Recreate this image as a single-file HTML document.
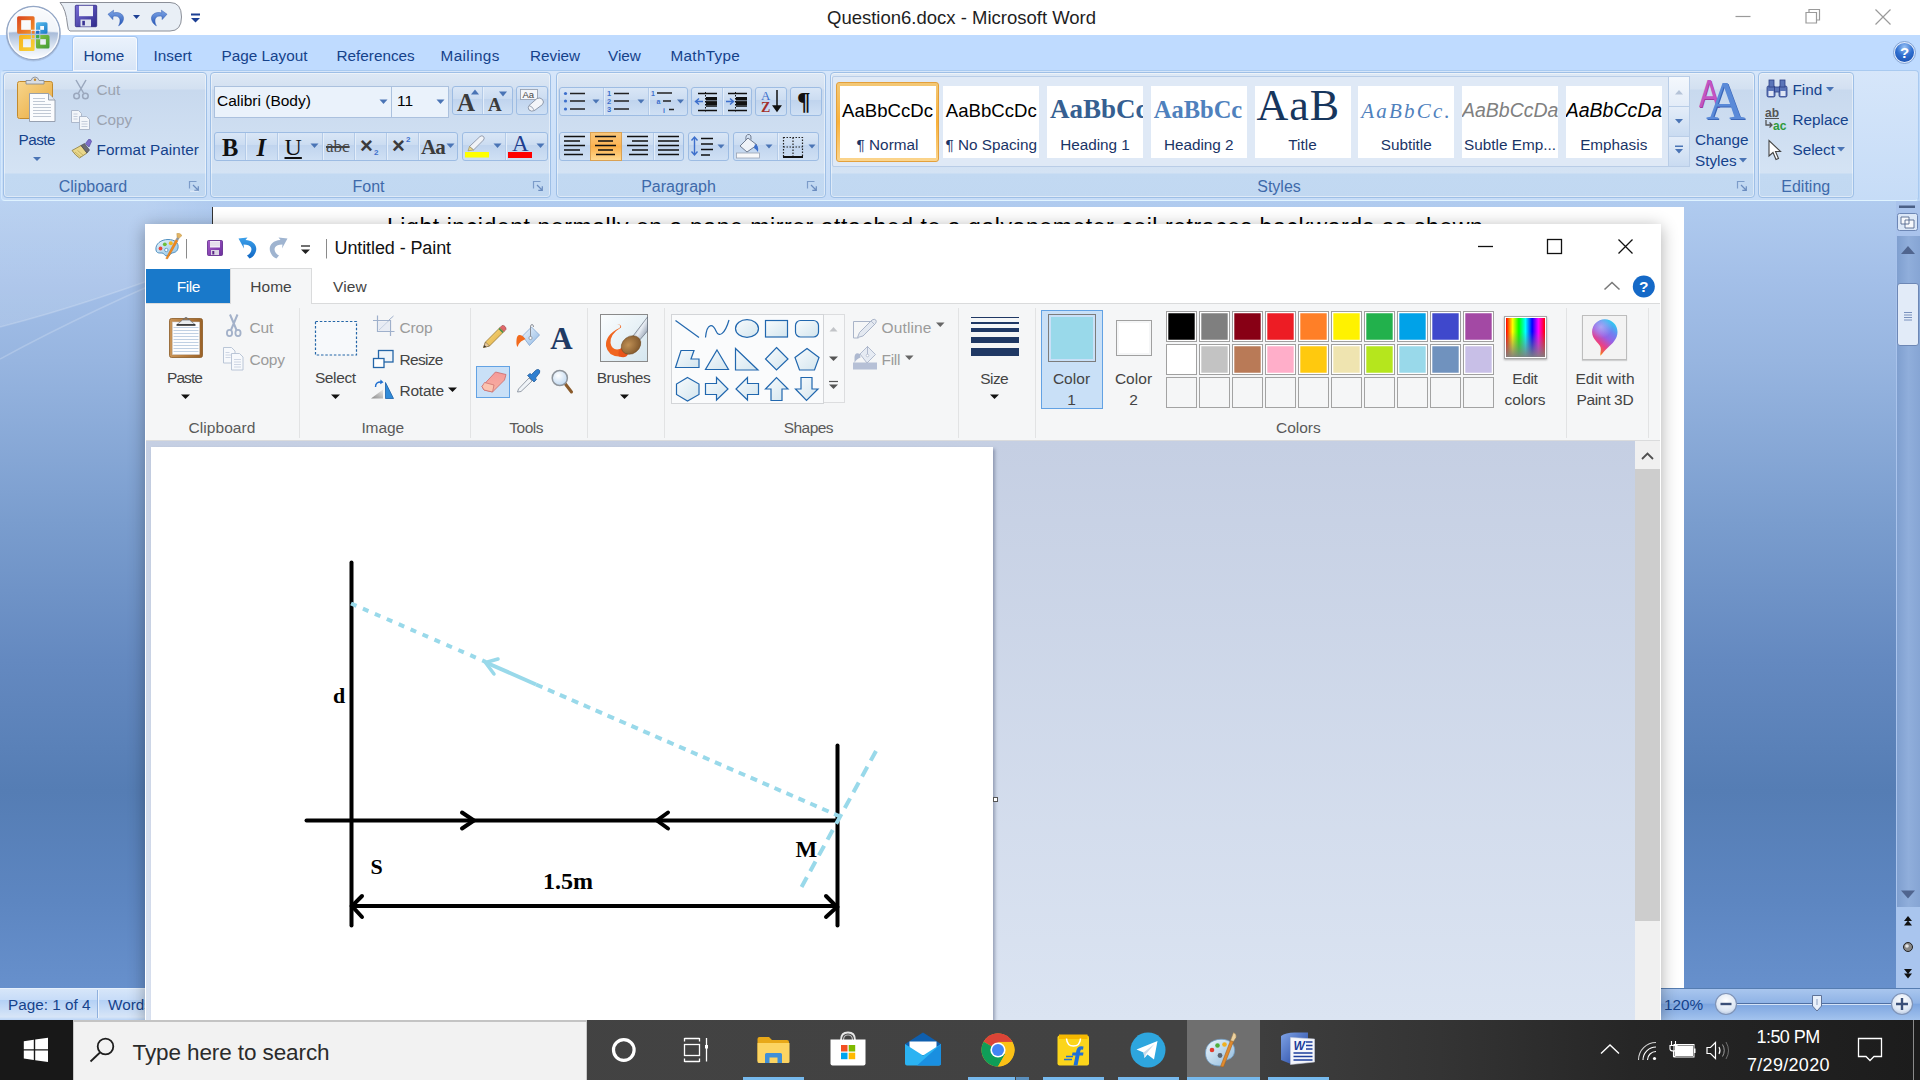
<!DOCTYPE html>
<html lang="en">
<head>
<meta charset="utf-8">
<title>Question6.docx - Microsoft Word</title>
<style>
*{box-sizing:border-box;margin:0;padding:0}
html,body{width:1920px;height:1080px;overflow:hidden;background:#fff;font-family:"Liberation Sans",sans-serif;}
.a{position:absolute}
.t{position:absolute;white-space:nowrap;line-height:1}
svg{position:absolute;overflow:visible}
/* ---------- WORD ---------- */
#w-title{left:0;top:0;width:1920px;height:35px;background:#fff}
#w-tabs{left:0;top:35px;width:1920px;height:35px;background:#bfdbff}
#w-ribbon{left:0;top:70px;width:1920px;height:131px;background:linear-gradient(#c3dcfb 0,#bdd7f6 100%)}
#w-ribbon-inner{left:1px;top:70px;width:1918px;height:131px;border:1px solid #a9caf0;border-bottom:1.5px solid #dff3ff;border-left-color:#d3e9fd;border-radius:4px;background:linear-gradient(#d6e6fa 0,#c6dcf7 100%)}
.wt{position:absolute;top:47px;font-size:15.3px;color:#15428b;white-space:nowrap;line-height:18px}
.grp{position:absolute;top:72px;height:126px;border:1px solid #9ebfe6;border-radius:4px;background:linear-gradient(#dde8f5 0,#d3e0f1 16px,#c8d9ee 17px,#d4e3f4 100px,#c2d9f2 101px,#c1d8f1 100%);box-shadow:inset 0 0 0 1px rgba(255,255,255,.45)}
.grp .lbl{position:absolute;left:0;right:0;top:105px;text-align:center;font-size:16px;color:#3e6aaa;line-height:18px}
.bg{position:absolute;height:29px;border:1px solid #9dbce3;border-radius:3px;background:linear-gradient(#d9e6f6 0,#cbdcf1 45%,#c0d4ee 46%,#cfe0f4 100%)}
.bsep{position:absolute;top:0;bottom:0;width:1px;background:#b4cbe8;border-right:1px solid #e4eefa;box-sizing:content-box}
#w-doc{left:0;top:201px;width:1920px;height:787px;background:linear-gradient(#b0cbef 0,#a3bfe8 80px,#97b5e0 160px,#7a9dce 320px,#6489c0 460px,#557db4 590px,#5d86c1 700px,#6790cc 787px)}
#w-page{left:212px;top:207px;width:1472px;height:820px;background:#fff;border-left:1px solid #333;}
#w-status{left:0;top:988px;width:1920px;height:32px;background:linear-gradient(#d7e6f9 0,#c7dcf8 35%,#b3d0f5 36%,#d7e5f7 90%,#bad4f7 100%);border-top:1px solid #e6f0fc}
.sb{position:absolute;top:86px;width:96px;height:72px;background:#fff;overflow:hidden}
.sb .pv{position:absolute;left:0;right:0;text-align:center;white-space:nowrap;line-height:1.15}
.sb .nm{position:absolute;left:0;right:0;top:50px;text-align:center;font-size:15.3px;color:#1a3466;white-space:nowrap;line-height:18px}
/* ---------- PAINT ---------- */
#p-win{left:145px;top:224px;width:1516px;height:800px;background:#fff;box-shadow:0 3px 16px rgba(0,0,0,.33)}
#p-rib{left:146px;top:303px;width:1514px;height:138px;background:#f5f6f7;border-top:1px solid #dadbdc;border-bottom:1px solid #dadbdc}
#p-work{left:146px;top:441px;width:1489px;height:579px;background:linear-gradient(#c5cfe3 0,#dbe4f2 100%)}
#p-canvas{left:151px;top:447px;width:842px;height:573px;background:#fff;box-shadow:2px 2px 3px rgba(90,100,130,.5)}
.pt{position:absolute;font-size:15.5px;color:#444;white-space:nowrap;line-height:18px}
.pd{color:#9d9d9d}
.psep{position:absolute;top:308px;height:130px;width:1px;background:#e2e3e4}
.plbl{position:absolute;top:418px;font-size:15.5px;color:#5d5d5d;line-height:18px;white-space:nowrap;transform:translateX(-50%)}
.cc{position:absolute;width:31px;height:31px;border:1px solid #a0a0a0;box-shadow:inset 0 0 0 1.3px #fff}
.ce{position:absolute;width:31px;height:31px;border:1px solid #a3a3a3;background:#f5f6f7}
/* ---------- TASKBAR ---------- */
#tb{left:0;top:1020px;width:1920px;height:60px;background:linear-gradient(90deg,#434343 0,#424242 62%,#343434 75%,#262626 85%,#1c1c1c 100%)}
</style>
</head>
<body>
<!-- ================= WORD ================= -->
<div id="w-title" class="a"></div>
<div id="w-tabs" class="a"></div>
<div id="w-ribbon" class="a"></div>
<div id="w-ribbon-inner" class="a"></div>
<div id="w-doc" class="a"></div>
<div id="w-page" class="a"></div>
<div id="w-status" class="a"></div>
<!-- title bar -->
<svg class="a" style="left:0;top:0" width="220" height="70" viewBox="0 0 220 70">
  <defs>
    <radialGradient id="ob" cx="50%" cy="30%" r="75%">
      <stop offset="0" stop-color="#ffffff"/><stop offset=".45" stop-color="#e9eff7"/><stop offset=".75" stop-color="#b9c9e0"/><stop offset="1" stop-color="#dfe8f4"/>
    </radialGradient>
    <linearGradient id="ob2" x1="0" y1="0" x2="0" y2="1"><stop offset="0" stop-color="#f4f7fb"/><stop offset=".46" stop-color="#dfe7f2"/><stop offset=".5" stop-color="#a9bcd9"/><stop offset=".75" stop-color="#dbe5f2"/><stop offset="1" stop-color="#ffffff"/></linearGradient><linearGradient id="obh" x1="0" y1="0" x2="0" y2="1"><stop offset="0" stop-color="#fff" stop-opacity=".95"/><stop offset="1" stop-color="#fff" stop-opacity=".2"/></linearGradient>
    <linearGradient id="og" x1="0" y1="0" x2="1" y2="1"><stop offset="0" stop-color="#d9421d"/><stop offset="1" stop-color="#f59a2c"/></linearGradient>
    <linearGradient id="bl" x1="0" y1="0" x2="1" y2="1"><stop offset="0" stop-color="#5cc1ee"/><stop offset="1" stop-color="#1a78c8"/></linearGradient>
    <linearGradient id="yl" x1="0" y1="0" x2="1" y2="1"><stop offset="0" stop-color="#f7b21c"/><stop offset="1" stop-color="#f8d23a"/></linearGradient>
    <linearGradient id="gr" x1="0" y1="0" x2="1" y2="1"><stop offset="0" stop-color="#8cc63f"/><stop offset="1" stop-color="#3f9a3a"/></linearGradient>
    <linearGradient id="sv" x1="0" y1="0" x2="1" y2="1"><stop offset="0" stop-color="#7a6fd6"/><stop offset="1" stop-color="#2f2a8c"/></linearGradient>
    <linearGradient id="ud" x1="0" y1="0" x2="0" y2="1"><stop offset="0" stop-color="#7fa6e6"/><stop offset="1" stop-color="#2455b8"/></linearGradient>
  </defs>
  <!-- QAT capsule -->
  <path d="M60 2.5 H170 Q181.5 2.5 181.5 17 Q181.5 31 170 31 H70 Q68 31 67.5 25 Q66 9 60 2.5 Z" fill="#e9eff6" stroke="#8b8f98" stroke-width="1"/>
  <!-- office button -->
  <circle cx="33.400" cy="34" r="27.600" fill="#7f90ad" opacity=".3"/>
  <circle cx="33.400" cy="33.100" r="26.600" fill="url(#ob2)" stroke="#94a7c6" stroke-width="1.300"/>
  <circle cx="33.400" cy="33.100" r="25.200" fill="none" stroke="#fff" stroke-width="1.200" opacity=".85"/>
  <path d="M8.500 32.500 A24.900 24.900 0 0 1 58.300 32.500 Q33.400 29 8.500 32.500Z" fill="#fff" opacity=".55"/>
  <!-- logo -->
  <g stroke-linejoin="round">
    <path d="M18.600 16.200 H33.100 Q34.600 16.200 34.600 17.700 V29.700 H30.800 V20.200 H21.250 V29.700 H30.800 V33.700 H18.600 Q17.100 33.700 17.100 32.200 V17.700 Q17.100 16.200 18.600 16.200Z" fill="url(#og)"/>
    <rect x="31.800" y="30.700" width="2.800" height="3" rx=".5" fill="#f07c2c"/><rect x="21.250" y="20.200" width="9.550" height="9.500" fill="#fff" opacity=".45"/>
    <path d="M37.500 22.200 H46 Q47.500 22.200 47.500 23.700 V32.200 Q47.500 33.700 46 33.700 H40.300 V29.700 H44 V26 H40.300 V29.700 H36 V23.700 Q36 22.200 37.500 22.200Z" fill="url(#bl)"/>
    <rect x="36" y="30.700" width="3.300" height="3" rx=".5" fill="#1f6fc8"/><rect x="40.300" y="26" width="3.700" height="3.700" fill="#fff" opacity=".5"/>
    <path d="M20.500 35.100 H30.800 V39.200 H23.100 V47.200 H30.800 V39.200 H34.600 V49.400 Q34.600 50.900 33.100 50.900 H20.500 Q19 50.900 19 49.400 V36.600 Q19 35.100 20.500 35.100Z" fill="url(#yl)"/>
    <rect x="31.800" y="35.100" width="2.800" height="3.100" rx=".5" fill="#f6bd2a"/><rect x="23.100" y="39.200" width="7.700" height="8" fill="#fff" opacity=".6"/>
    <path d="M40.300 35.100 H48 Q49.500 35.100 49.500 36.600 V47.100 Q49.500 48.600 48 48.600 H37.500 Q36 48.600 36 47.100 V39.200 H40.300 V44.600 H45.800 V39.200 H40.300Z" fill="url(#gr)"/>
    <rect x="36" y="35.100" width="3.300" height="3.100" rx=".5" fill="#3fae49"/><rect x="40.300" y="39.200" width="5.500" height="5.400" fill="#fff" opacity=".6"/>
  </g>
  <!-- save -->
  <g>
    <rect x="75.3" y="5.3" width="21.4" height="21.4" rx="1" fill="url(#sv)" stroke="#2b2580" stroke-width=".8"/>
    <rect x="79" y="5.8" width="14" height="10.4" fill="#eef1f8"/>
    <rect x="80.5" y="19.5" width="10.5" height="7" fill="#dfe3ef"/>
    <rect x="82.3" y="20.8" width="2.6" height="4.6" fill="#3a3394"/>
  </g>
  <!-- undo -->
  <path d="M108 14.2 L113.6 10.2 L113.2 13 C120.5 11 124.6 15.5 123.3 20 C122.6 22.8 120.6 24.8 118.6 25.8 C120.4 22.6 120.6 18.8 118.6 17.2 C117.2 16 115 15.9 113 16.4 L112.8 19.6 Z" fill="url(#ud)" stroke="#2a56ae" stroke-width=".5"/>
  <path d="M133 15 h7 l-3.5 4z" fill="#1c3f94"/>
  <!-- redo -->
  <path d="M167 14.2 L161.4 10.2 L161.8 13 C154.5 11 150.4 15.5 151.7 20 C152.4 22.8 154.4 24.8 156.4 25.8 C154.6 22.6 154.4 18.8 156.4 17.2 C157.8 16 160 15.9 162 16.4 L162.2 19.6 Z" fill="url(#ud)" stroke="#2a56ae" stroke-width=".5"/>
  <!-- customize -->
  <rect x="191" y="13.5" width="9" height="2" fill="#1c3f94"/>
  <path d="M191 18 h9 l-4.5 4.6z" fill="#1c3f94"/>
</svg>
<div class="t" style="left:827px;top:9px;font-size:18.5px;color:#1e1e1e">Question6.docx - Microsoft Word</div>
<svg class="a" style="left:1720px;top:0" width="200" height="35" viewBox="0 0 200 35">
  <g stroke="#9a9a9a" stroke-width="1.2" fill="none">
    <path d="M15.5 16.5 h15"/>
    <path d="M86 12.5 h10.5 v10.5 h-10.5z M89 12.5 v-3 h10.5 v10.5 h-3"/>
    <path d="M155.5 9.5 l15 15 M170.5 9.5 l-15 15"/>
  </g>
</svg>
<!-- tabs -->
<div class="a" style="left:72px;top:36px;width:66px;height:35px;border:1px solid #a5c6f0;border-bottom:none;border-radius:4px 4px 0 0;background:linear-gradient(#eaf2fc 0,#dfeaf8 60%,#d6e4f7 100%);box-shadow:inset 0 0 0 1px rgba(255,255,255,.7)"></div>
<div class="wt" style="left:83.5px">Home</div>
<div class="wt" style="left:153.5px">Insert</div>
<div class="wt" style="left:221.5px">Page Layout</div>
<div class="wt" style="left:336.5px">References</div>
<div class="wt" style="left:440.5px;letter-spacing:.4px">Mailings</div>
<div class="wt" style="left:530px">Review</div>
<div class="wt" style="left:608px">View</div>
<div class="wt" style="left:670.5px;letter-spacing:.3px">MathType</div>
<svg class="a" style="left:1893px;top:41px" width="23" height="23" viewBox="0 0 23 23">
  <defs><radialGradient id="hp" cx="50%" cy="25%" r="80%"><stop offset="0" stop-color="#9cc4f5"/><stop offset=".5" stop-color="#2f6fd0"/><stop offset="1" stop-color="#1b4fae"/></radialGradient></defs>
  <circle cx="11.5" cy="11.5" r="10.3" fill="url(#hp)" stroke="#dfeafc" stroke-width="1.6"/>
  <circle cx="11.5" cy="11.5" r="11" fill="none" stroke="#6f93c9" stroke-width=".8"/>
  <text x="11.5" y="17" text-anchor="middle" font-family="Liberation Sans, sans-serif" font-weight="bold" font-size="15" fill="#fff">?</text>
</svg>
<!-- ===== Clipboard group ===== -->
<div class="grp" style="left:3px;width:204px"><div class="lbl" style="left:-24px">Clipboard</div></div>
<svg class="a" style="left:14px;top:76px" width="48" height="50" viewBox="0 0 48 50">
  <defs><linearGradient id="cb" x1="0" y1="0" x2="1" y2="1"><stop offset="0" stop-color="#f7d58c"/><stop offset="1" stop-color="#e9a93c"/></linearGradient></defs>
  <rect x="3.5" y="5.5" width="35" height="37" rx="2" fill="url(#cb)" stroke="#c28a2e"/>
  <path d="M12 8 v-3.5 h5 q1-3.5 4-3.5 q3 0 4 3.5 h5 v3.5z" fill="#d9dde3" stroke="#7f8792" stroke-width=".8"/>
  <circle cx="21" cy="3.8" r="1.2" fill="#c28a2e"/>
  <path d="M15.5 17.5 h19 l6.5 6.5 v21.5 h-25.5z" fill="#fbfcfe" stroke="#8e98a8" stroke-width=".9"/>
  <path d="M34.5 17.5 v6.5 h6.5" fill="#dfe5ee" stroke="#8e98a8" stroke-width=".9"/>
  <g stroke="#b9c2cf" stroke-width=".9"><path d="M19 22.5h12M19 25.5h12M19 28.5h18M19 31.5h18M19 34.5h18M19 37.5h18M19 40.5h18"/></g>
</svg>
<div class="t" style="left:18.5px;top:132px;font-size:15.3px;color:#15428b;letter-spacing:-.5px">Paste</div>
<svg class="a" style="left:32px;top:156px" width="10" height="6"><path d="M1 1h8l-4 4z" fill="#4a74b5"/></svg>
<svg class="a" style="left:72px;top:79px" width="18" height="22" viewBox="0 0 18 22">
  <g stroke="#9aa7bd" stroke-width="1.5" fill="none"><path d="M4 1 L11.5 14 M14 1 L6.5 14"/><circle cx="4.6" cy="17" r="2.8"/><circle cx="13.4" cy="17" r="2.8"/></g>
</svg>
<div class="t" style="left:96.5px;top:82px;font-size:15.3px;color:#9ba3b0">Cut</div>
<svg class="a" style="left:70px;top:109px" width="22" height="22" viewBox="0 0 22 22">
  <g fill="#f3f6fa" stroke="#a7b3c7" stroke-width=".9"><path d="M1.5 1.5h7l3 3v9h-10z"/><path d="M9.5 7.5h7l3 3v10h-10z"/></g>
  <g stroke="#b8c3d3" stroke-width=".8"><path d="M3.5 5h4M3.5 7.5h4M3.5 10h4M11.5 12.5h6M11.5 15h6M11.5 17.5h6"/></g>
</svg>
<div class="t" style="left:96.5px;top:112px;font-size:15.3px;color:#9ba3b0">Copy</div>
<svg class="a" style="left:70px;top:138px" width="24" height="22" viewBox="0 0 24 22">
  <path d="M2 12.5 L11 7.5 L17 15 L9.5 20 Q5.5 17.5 2 12.5Z" fill="#e9d78a" stroke="#8a7a3a" stroke-width=".8"/>
  <path d="M11 7.5 L14.5 5.5 L19.5 12 L17 15Z" fill="#6b6b74" stroke="#3f3f48" stroke-width=".6"/>
  <path d="M15.5 5.5 L18.5 1.5 Q21 .8 21.5 3.5 L19 9Z" fill="#7d6cc9" stroke="#4a3f96" stroke-width=".6"/>
  <path d="M5 14l6 5M7.5 12.5l6 5" stroke="#b9a659" stroke-width=".7"/>
</svg>
<div class="t" style="left:96.5px;top:141.5px;font-size:15.3px;color:#15428b;letter-spacing:.1px">Format Painter</div>
<svg class="a dl" style="left:188px;top:180px" width="12" height="12" viewBox="0 0 12 12"><path d="M1.5 8.5v-7h7" fill="none" stroke="#7c9cc9" stroke-width="1.2"/><path d="M5 5l5 5M10.3 6.3v4h-4" fill="none" stroke="#6a8cbf" stroke-width="1.2"/><path d="M10.5 11.2h-8.5" stroke="#fff" stroke-width=".8" opacity=".8"/></svg>

<!-- ===== Font group ===== -->
<div class="grp" style="left:210px;width:341px"><div class="lbl" style="left:-24px">Font</div></div>
<svg class="a dl" style="left:532px;top:180px" width="12" height="12" viewBox="0 0 12 12"><path d="M1.5 8.5v-7h7" fill="none" stroke="#7c9cc9" stroke-width="1.2"/><path d="M5 5l5 5M10.3 6.3v4h-4" fill="none" stroke="#6a8cbf" stroke-width="1.2"/></svg>
<div class="a" style="left:214px;top:86px;width:178px;height:32px;background:#eaf2fb;border:1px solid #abc1de"></div>
<div class="a" style="left:391px;top:86px;width:58px;height:32px;background:#eaf2fb;border:1px solid #abc1de"></div>
<div class="t" style="left:217px;top:93px;font-size:15.5px;color:#000">Calibri (Body)</div>
<div class="t" style="left:397px;top:93px;font-size:15.5px;color:#000">11</div>
<svg class="a" style="left:379px;top:99px" width="9" height="6"><path d="M.5 .5h8l-4 4.5z" fill="#4a74b5"/></svg>
<svg class="a" style="left:436px;top:99px" width="9" height="6"><path d="M.5 .5h8l-4 4.5z" fill="#4a74b5"/></svg>
<div class="bg" style="left:452px;top:86px;width:61px"><div class="bsep" style="left:29px"></div></div>
<div class="t" style="left:457px;top:88.500px;font:bold 25px 'Liberation Serif',serif;color:#3b3b3b">A</div>
<div class="t" style="left:488px;top:94px;font:bold 19px 'Liberation Serif',serif;color:#3b3b3b">A</div>
<svg class="a" style="left:471px;top:89px" width="8" height="6"><path d="M0 5.5h8l-4-5z" fill="#4a74b5"/></svg>
<svg class="a" style="left:499px;top:91px" width="8" height="6"><path d="M0 .5h8l-4 5z" fill="#4a74b5"/></svg>
<div class="bg" style="left:516px;top:86px;width:32px"></div>
<svg class="a" style="left:518px;top:87px" width="28" height="28" viewBox="0 0 28 28">
  <rect x="2.5" y="2.5" width="17" height="10" fill="#f4f6fa" stroke="#8f99aa" stroke-width=".8"/>
  <text x="4.5" y="11" font-family="Liberation Sans, sans-serif" font-size="9.5" fill="#444">Aa</text>
  <path d="M11 18.5 l8-7 q3-1.5 5.5 1 q2 2.500 0 5 l-8 6 q-3 1.500-5.500-.5 q-1.500-2.500 0-4.500z" fill="#f3f5f9" stroke="#8590a3" stroke-width=".9"/>
  <path d="M11 18.5 q3 .5 5.500 5" fill="none" stroke="#8590a3" stroke-width=".8"/>
</svg>
<!-- row 2 -->
<div class="bg" style="left:214px;top:131.500px;width:244px">
  <div class="bsep" style="left:29.500px"></div><div class="bsep" style="left:61.500px"></div><div class="bsep" style="left:106.500px"></div><div class="bsep" style="left:138.500px"></div><div class="bsep" style="left:170.500px"></div><div class="bsep" style="left:202.500px"></div>
</div>
<div class="t" style="left:222px;top:134px;font:bold 24.500px 'Liberation Serif',serif;color:#111">B</div>
<div class="t" style="left:256.500px;top:134px;font:italic bold 24.500px 'Liberation Serif',serif;color:#111">I</div>
<div class="t" style="left:284.500px;top:133.500px;font:24px 'Liberation Serif',serif;color:#111;text-decoration:underline;text-decoration-thickness:1.500px;text-underline-offset:2px">U</div>
<svg class="a" style="left:310px;top:143px" width="9" height="6"><path d="M.5 .5h8l-4 4.5z" fill="#4a74b5"/></svg>
<div class="t" style="left:326px;top:137px;font:17px 'Liberation Serif',serif;color:#444;text-decoration:line-through;text-decoration-thickness:1.500px">abc</div>
<div class="t" style="left:360px;top:133px;font:bold 22px 'Liberation Sans',sans-serif;color:#3b3b3b">×</div>
<div class="t" style="left:374px;top:148px;font:bold 8px 'Liberation Sans',sans-serif;color:#3d6fcc">2</div>
<div class="t" style="left:392px;top:133px;font:bold 22px 'Liberation Sans',sans-serif;color:#3b3b3b">×</div>
<div class="t" style="left:406px;top:135px;font:bold 8px 'Liberation Sans',sans-serif;color:#3d6fcc">2</div>
<div class="t" style="left:421px;top:135px;font:bold 21px 'Liberation Serif',serif;color:#3b3b3b;letter-spacing:-1px">Aa</div>
<svg class="a" style="left:446px;top:143px" width="9" height="6"><path d="M.5 .5h8l-4 4.5z" fill="#4a74b5"/></svg>
<div class="bg" style="left:461.500px;top:131.500px;width:86.500px"><div class="bsep" style="left:42.500px"></div></div>
<svg class="a" style="left:463px;top:133px" width="30" height="26" viewBox="0 0 30 26">
  <path d="M6.500 13.500 L17 3.500 q2-1.500 3.500 0 q1.500 1.500 0 3.500 L10.500 17z" fill="#f1f3f7" stroke="#8a93a5" stroke-width=".9"/>
  <path d="M6.500 13.500 L10.500 17 L5 17.800z" fill="#e8d58c" stroke="#9a8c50" stroke-width=".6"/>
  <rect x="2" y="19" width="24" height="5.500" fill="#ffff00"/>
</svg>
<svg class="a" style="left:493px;top:143px" width="9" height="6"><path d="M.5 .5h8l-4 4.5z" fill="#4a74b5"/></svg>
<div class="t" style="left:512px;top:131px;font:23px 'Liberation Serif',serif;color:#1f3f8f">A</div>
<div class="a" style="left:508px;top:152px;width:24px;height:5.500px;background:#ff0000"></div>
<svg class="a" style="left:536px;top:143px" width="9" height="6"><path d="M.5 .5h8l-4 4.5z" fill="#4a74b5"/></svg>

<!-- ===== Paragraph group ===== -->
<div class="grp" style="left:555.500px;width:270px"><div class="lbl" style="left:-24px">Paragraph</div></div>
<svg class="a dl" style="left:806px;top:180px" width="12" height="12" viewBox="0 0 12 12"><path d="M1.5 8.5v-7h7" fill="none" stroke="#7c9cc9" stroke-width="1.2"/><path d="M5 5l5 5M10.3 6.3v4h-4" fill="none" stroke="#6a8cbf" stroke-width="1.2"/></svg>
<div class="bg" style="left:559px;top:86.500px;width:128.500px"><div class="bsep" style="left:42.500px"></div><div class="bsep" style="left:88px"></div></div>
<svg class="a" style="left:559px;top:87px" width="130" height="28" viewBox="0 0 130 28">
  <g fill="#3d6fcc"><circle cx="6.500" cy="6.500" r="1.600"/><circle cx="6.500" cy="14" r="1.600"/><circle cx="6.500" cy="22" r="1.600"/></g>
  <g stroke="#222" stroke-width="1.300"><path d="M11 6.500h15M11 14h15M11 22h15"/></g>
  <path d="M33.500 12.500h7l-3.500 4z" fill="#4a74b5"/>
  <g font-family="Liberation Sans, sans-serif" font-weight="bold" font-size="7.500" fill="#3d6fcc"><text x="48" y="9">1</text><text x="48" y="17">2</text><text x="48" y="25">3</text></g>
  <g stroke="#222" stroke-width="1.300"><path d="M55 6.500h15M55 14h15M55 22h15"/></g>
  <path d="M78.500 12.500h7l-3.500 4z" fill="#4a74b5"/>
  <g font-family="Liberation Sans, sans-serif" font-weight="bold" font-size="7" fill="#3d6fcc"><text x="92" y="8.500">1</text><text x="97.500" y="17">a</text><text x="104" y="25.500">i</text></g>
  <g stroke="#222" stroke-width="1.600"><path d="M98 6h15M104 14h8M110 22.500h5"/></g>
  <path d="M118 12.500h7l-3.500 4z" fill="#4a74b5"/>
</svg>
<div class="bg" style="left:691px;top:86.500px;width:60.500px"><div class="bsep" style="left:29.500px"></div></div>
<svg class="a" style="left:691px;top:87px" width="62" height="28" viewBox="0 0 62 28">
  <g stroke="#111" stroke-width="1.300"><path d="M7 6.500h19M15 11h11M15 15h11M15 19h11M7 23.500h19" /><path d="M14.500 5v20" stroke-dasharray="1.500 1.500" stroke-width="1"/></g>
  <rect x="15" y="10" width="11" height="3.500" fill="#111"/><rect x="15" y="14.500" width="11" height="3.500" fill="#111"/>
  <path d="M12 14.500h-7m3-3l-3.500 3 3.500 3" fill="none" stroke="#3d6fcc" stroke-width="1.400"/>
  <g transform="translate(30 0)"><g stroke="#111" stroke-width="1.300"><path d="M7 6.500h19M15 11h11M15 15h11M15 19h11M7 23.500h19" /><path d="M14.500 5v20" stroke-dasharray="1.500 1.500" stroke-width="1"/></g>
  <rect x="15" y="10" width="11" height="3.500" fill="#111"/><rect x="15" y="14.500" width="11" height="3.500" fill="#111"/>
  <path d="M5 14.500h7m-3-3l3.500 3-3.500 3" fill="none" stroke="#3d6fcc" stroke-width="1.400"/></g>
</svg>
<div class="bg" style="left:755px;top:86.500px;width:32px"></div>
<div class="t" style="left:761px;top:88px;font:13px 'Liberation Serif',serif;color:#3d6fcc">A</div>
<div class="t" style="left:761px;top:100px;font:bold 14px 'Liberation Serif',serif;color:#a3302a">Z</div>
<svg class="a" style="left:772px;top:90px" width="10" height="24"><path d="M5 0v20M1.500 16l3.500 5 3.500-5z" stroke="#111" stroke-width="1.500" fill="#111"/></svg>
<div class="bg" style="left:790px;top:86.500px;width:32px"></div>
<div class="t" style="left:797px;top:88px;font:bold 25px 'Liberation Serif',serif;color:#111">¶</div>
<!-- row2 -->
<div class="bg" style="left:559px;top:131.500px;width:124.500px">
  <div class="a" style="left:30px;top:-1px;width:32px;height:29px;background:linear-gradient(#f9c77a 0,#fdb75a 40%,#fcb04a 50%,#ffd98f 100%);border:1px solid #d9a154"></div>
  <div class="bsep" style="left:93px"></div>
</div>
<svg class="a" style="left:559px;top:132px" width="126" height="28" viewBox="0 0 126 28">
  <g stroke="#111" stroke-width="1.500">
    <path d="M5 7h21M5 11.500h16M5 16h21M5 20.500h16M5 25h19" transform="translate(0 -2.500)"/>
    <path d="M36 7h21M39 11.500h15M36 16h21M39 20.500h15M37 25h19" transform="translate(0 -2.500)"/>
    <path d="M68 7h21M73 11.500h16M68 16h21M73 20.500h16M70 25h19" transform="translate(0 -2.500)"/>
    <path d="M99 7h21M99 11.500h21M99 16h21M99 20.500h21M99 25h21" transform="translate(0 -2.500)"/>
  </g>
</svg>
<div class="bg" style="left:687.500px;top:131.500px;width:41px"></div>
<svg class="a" style="left:688px;top:132px" width="42" height="28" viewBox="0 0 42 28">
  <path d="M6.500 5v18M3.500 8.500l3-3.500 3 3.500M3.500 19.500l3 3.500 3-3.500" fill="none" stroke="#3d6fcc" stroke-width="1.400"/>
  <g stroke="#111" stroke-width="1.400"><path d="M13 6.500h12M13 12h12M13 17.500h12M13 23h9"/></g>
  <path d="M29.500 12.500h7l-3.500 4z" fill="#4a74b5"/>
</svg>
<div class="bg" style="left:732.500px;top:131.500px;width:86px"><div class="bsep" style="left:43px"></div></div>
<svg class="a" style="left:733px;top:132px" width="86" height="28" viewBox="0 0 86 28">
  <path d="M7 14 L15 6 L24 13 L14 20z" fill="#eef2f8" stroke="#6f7b90" stroke-width="1"/>
  <path d="M13 8 q-1-6 3.500-5.500 q2 .5 1.500 5" fill="none" stroke="#6f7b90" stroke-width="1"/>
  <path d="M22 12 q4 1 3 8 q-2-3-4-4z" fill="#3d6fcc"/>
  <rect x="3.500" y="21" width="23" height="5" fill="#f7f8fa" stroke="#9aa3b3" stroke-width=".8"/>
  <path d="M32.500 12.500h7l-3.500 4z" fill="#4a74b5"/>
  <g stroke="#222" stroke-width="1.200" stroke-dasharray="1.500 1.500" fill="none"><path d="M50.500 5.500h19v19h-19zM60 5.500v19M50.500 15h19" /></g>
  <path d="M50 25h20" stroke="#111" stroke-width="2"/>
  <path d="M75.500 12.500h7l-3.500 4z" fill="#4a74b5"/>
</svg>
<!-- ===== Styles group ===== -->
<div class="grp" style="left:829.500px;width:925px"><div class="lbl" style="left:-26px">Styles</div></div>
<svg class="a dl" style="left:1736px;top:180px" width="12" height="12" viewBox="0 0 12 12"><path d="M1.5 8.5v-7h7" fill="none" stroke="#7c9cc9" stroke-width="1.2"/><path d="M5 5l5 5M10.3 6.3v4h-4" fill="none" stroke="#6a8cbf" stroke-width="1.2"/></svg>
<div class="a" style="left:832px;top:76px;width:858px;height:91px;border:1px solid #b9cde7;background:#dfe9f6;border-radius:2px"></div>
<div class="a" style="left:835.500px;top:82px;width:103.500px;height:80px;border-radius:3px;background:linear-gradient(#f3c876 0,#f9b23c 50%,#fbd58e 100%);border:1px solid #e3a03c"></div>
<div class="sb" style="left:839.500px"><div class="pv" style="font-size:18.600px;color:#000;top:14px">AaBbCcDc</div><div class="nm">¶ Normal</div></div>
<div class="sb" style="left:943.250px"><div class="pv" style="font-size:18.600px;color:#000;top:14px">AaBbCcDc</div><div class="nm">¶ No Spacing</div></div>
<div class="sb" style="left:1047px"><div class="pv" style="font:bold 27px 'Liberation Serif',serif;color:#365f91;top:8px;left:3px;text-align:left">AaBbCc</div><div class="nm">Heading 1</div></div>
<div class="sb" style="left:1150.750px"><div class="pv" style="font:bold 24.500px 'Liberation Serif',serif;color:#4f81bd;top:10px;left:3px;text-align:left">AaBbCc</div><div class="nm">Heading 2</div></div>
<div class="sb" style="left:1254.500px"><div class="pv" style="font:44px 'Liberation Serif',serif;color:#17365d;top:-6px;left:2px;text-align:left;letter-spacing:1px">AaB</div><div class="nm">Title</div></div>
<div class="sb" style="left:1358.250px"><div class="pv" style="font:italic 21px 'Liberation Serif',serif;color:#4f81bd;top:13px;left:3px;text-align:left;letter-spacing:2.200px">AaBbCc.</div><div class="nm">Subtitle</div></div>
<div class="sb" style="left:1462px"><div class="pv" style="font-style:italic;font-size:19.500px;color:#808080;top:13px">AaBbCcDa</div><div class="nm">Subtle Emp...</div></div>
<div class="sb" style="left:1565.750px"><div class="pv" style="font-style:italic;font-size:19.500px;color:#000;top:13px">AaBbCcDa</div><div class="nm">Emphasis</div></div>
<div class="a" style="left:1668px;top:76px;width:22px;height:31px;border:1px solid #b9cde7;background:linear-gradient(#f4f8fd,#e3ecf8)"></div>
<div class="a" style="left:1668px;top:106px;width:22px;height:31px;border:1px solid #b9cde7;background:linear-gradient(#e4edf9,#c9dbf1)"></div>
<div class="a" style="left:1668px;top:136px;width:22px;height:31px;border:1px solid #b9cde7;background:linear-gradient(#e4edf9,#c9dbf1)"></div>
<svg class="a" style="left:1674px;top:88px" width="10" height="70" viewBox="0 0 10 70"><path d="M1 6.500h8l-4-4.500z" fill="#b5c3d8"/><path d="M1 31h8l-4 4.500z" fill="#4a74b5"/><path d="M1 57.500h8v1.500h-8zM1 61h8l-4 4.500z" fill="#4a74b5"/></svg>
<div class="t" style="left:1699px;top:73.300px;font:38px 'Liberation Sans',sans-serif;color:#c254c4;transform:scaleX(.8);transform-origin:0 0;text-shadow:1px 1px 0 #9a3a9c">A</div>
<div class="t" style="left:1706px;top:70.300px;font:54px 'Liberation Serif',serif;color:#5a8ad8;text-shadow:1px 1px 0 #3a66b8">A</div>

<div class="t" style="left:1695px;top:132px;font-size:15.300px;color:#15428b">Change</div>
<div class="t" style="left:1695px;top:153px;font-size:15.300px;color:#15428b">Styles</div>
<svg class="a" style="left:1739px;top:158px" width="8" height="5"><path d="M0 0h8l-4 4.500z" fill="#4a74b5"/></svg>
<!-- ===== Editing group ===== -->
<div class="grp" style="left:1757.500px;width:96.500px"><div class="lbl">Editing</div></div>
<svg class="a" style="left:1765px;top:78px" width="24" height="22" viewBox="0 0 24 22">
  <g fill="#5a74b8" stroke="#2c3f86" stroke-width=".8"><rect x="2" y="8" width="8" height="11" rx="1.500"/><rect x="14" y="8" width="8" height="11" rx="1.500"/><rect x="4" y="2" width="5" height="7"/><rect x="15" y="2" width="5" height="7"/><rect x="9.500" y="9" width="5" height="5"/></g>
  <rect x="3.500" y="13" width="5" height="5" fill="#dfe6f5"/><rect x="15.500" y="13" width="5" height="5" fill="#dfe6f5"/>
</svg>
<div class="t" style="left:1792.500px;top:82px;font-size:15.300px;color:#15428b">Find</div>
<svg class="a" style="left:1826px;top:87px" width="8" height="5"><path d="M0 0h8l-4 4.500z" fill="#4a74b5"/></svg>
<div class="t" style="left:1765px;top:106px;font:bold 12px 'Liberation Sans',sans-serif;color:#555;text-decoration:underline">ab</div>
<div class="t" style="left:1773px;top:119px;font:bold 12px 'Liberation Sans',sans-serif;color:#2f9a3a">ac</div>
<svg class="a" style="left:1765px;top:119px" width="9" height="10"><path d="M1 1v5h6m-2.500-2.500l2.500 2.500-2.500 2.500" fill="none" stroke="#555" stroke-width="1.300"/></svg>
<div class="t" style="left:1792.500px;top:112px;font-size:15.300px;color:#15428b">Replace</div>
<svg class="a" style="left:1767px;top:139px" width="16" height="22" viewBox="0 0 16 22"><path d="M2 1.500 L2 17 L6 13.500 L9 20.500 L11.500 19.500 L8.500 12.500 L13.500 12.500Z" fill="#fff" stroke="#444" stroke-width="1.100"/></svg>
<div class="t" style="left:1792.500px;top:142px;font-size:15.300px;color:#15428b">Select</div>
<svg class="a" style="left:1837px;top:147px" width="8" height="5"><path d="M0 0h8l-4 4.500z" fill="#4a74b5"/></svg>

<!-- ===== document area ===== -->
<svg class="a" style="left:0;top:201px" width="212" height="787" viewBox="0 0 212 787">
  <defs><linearGradient id="swf" x1="0" y1="0" x2="1" y2="0"><stop offset="0" stop-color="#fff" stop-opacity=".13"/><stop offset=".68" stop-color="#fff" stop-opacity=".13"/><stop offset="1" stop-color="#fff" stop-opacity="0"/></linearGradient></defs><path d="M0 126 C70 108 140 84 212 56 L212 0 L0 0Z" fill="url(#swf)"/>
  <path d="M0 126 C70 108 140 84 212 56" fill="none" stroke="#fff" stroke-opacity=".18" stroke-width="1.500"/>
  <path d="M0 158 C70 120 140 88 212 58" fill="none" stroke="#fff" stroke-opacity=".2" stroke-width="1.500"/>
</svg>
<div class="a" style="left:388px;top:207px;width:1140px;height:17px;overflow:hidden"><div class="t" style="left:-1px;top:9.3px;font-size:23px;color:#000;letter-spacing:.57px">Light incident normally on a pane mirror attached to a galvanometer coil retraces backwards as shown.</div></div>
<!-- word v-scrollbar -->
<div class="a" style="left:1896px;top:201px;width:24px;height:787px;background:#a9c3ec"></div>
<div class="a" style="left:1897px;top:236px;width:23px;height:676px;background:linear-gradient(90deg,#7f9fcf,#90aedb 50%,#86a5d4)"></div>
<svg class="a" style="left:1896px;top:201px" width="24" height="787" viewBox="0 0 24 787">
  <rect x="3" y="4.500" width="16" height="2.500" fill="#4a5f86"/>
  <rect x="1.500" y="12.500" width="20" height="17" rx="2" fill="#dbe7f7" stroke="#6d87b5"/>
  <path d="M5 16h8v7h-8zM9 19h9v8h-9z" fill="#f7f9fc" stroke="#55698f" stroke-width=".9"/>
  <path d="M5 53h14l-7-8z" fill="#50658f"/>
  <rect x="1.500" y="82.500" width="21" height="62" rx="2.500" fill="#e2ebf8" stroke="#6d87b5"/>
  <path d="M8 111.500h8M8 114h8M8 116.500h8M8 119h8" stroke="#6d87b5" stroke-width=".9"/>
  <path d="M5 689.500h14l-7 8z" fill="#50658f"/>
  <rect x="0" y="706" width="24" height="81" fill="#a9c5ee"/>
  <path d="M8 720h8l-4-5zM8 724.500h8l-4-5z" fill="#111"/>
  <circle cx="12" cy="746" r="4.500" fill="#888" stroke="#222"/><circle cx="11" cy="745" r="1.800" fill="#e6e6e6"/>
  <path d="M8 768h8l-4 5zM8 772.500h8l-4 5z" fill="#111"/>
</svg>
<!-- status bar -->
<div class="t" style="left:8px;top:997px;font-size:15.300px;color:#15428b">Page: 1 of 4</div>
<div class="a" style="left:97px;top:990px;width:1px;height:28px;background:#8fb0de;border-right:1px solid #eaf2fc;box-sizing:content-box"></div>
<div class="t" style="left:108px;top:997px;font-size:15.300px;color:#15428b">Words</div>
<div class="a" style="left:1661px;top:988px;width:259px;height:32px;background:linear-gradient(#a9c6ee 0,#8fb3e6 45%,#7ea6e0 50%,#a3c3ee 100%);border-top:1px solid #567db1"></div>
<div class="t" style="left:1664px;top:997px;font-size:15.300px;color:#15428b">120%</div>
<svg class="a" style="left:1710px;top:990px" width="210" height="28" viewBox="0 0 210 28">
  <defs><radialGradient id="zb" cx="50%" cy="35%" r="70%"><stop offset="0" stop-color="#fff"/><stop offset=".7" stop-color="#dbe5f3"/><stop offset="1" stop-color="#a9bcd9"/></radialGradient></defs>
  <path d="M26 13.500h156" stroke="#4f6fa3" stroke-width="1"/><path d="M26 14.500h156" stroke="#d5e3f7" stroke-width="1"/>
  <circle cx="16" cy="14" r="10.500" fill="url(#zb)" stroke="#7f94b8" stroke-width="1.200"/><path d="M10.500 14h11" stroke="#3a4f78" stroke-width="2.400"/>
  <circle cx="192" cy="14" r="10.500" fill="url(#zb)" stroke="#7f94b8" stroke-width="1.200"/><path d="M186 14h12M192 8v12" stroke="#3a4f78" stroke-width="2.400"/>
  <path d="M102.500 5.500h9v10.500l-4.500 5-4.500-5z" fill="#e9f0fa" stroke="#5e7399" stroke-width="1"/><path d="M107 9v6" stroke="#8da0c0" stroke-width="1"/>
</svg>
<!--WORD-DETAIL-->
<!-- ================= PAINT ================= -->
<div id="p-win" class="a"></div>
<div id="p-rib" class="a"></div>
<div id="p-work" class="a"></div>
<div id="p-canvas" class="a"></div>
<!-- paint title bar -->
<svg class="a" style="left:146px;top:225px" width="200" height="44" viewBox="0 0 200 44">
  <defs>
    <linearGradient id="pal" x1="0" y1="0" x2="1" y2="1"><stop offset="0" stop-color="#e8f4fb"/><stop offset="1" stop-color="#8fc1e4"/></linearGradient>
    <linearGradient id="psv" x1="0" y1="0" x2="1" y2="1"><stop offset="0" stop-color="#a55cc8"/><stop offset="1" stop-color="#6d2f9e"/></linearGradient>
    <linearGradient id="pud" x1="0" y1="0" x2="0" y2="1"><stop offset="0" stop-color="#3ba0ea"/><stop offset="1" stop-color="#1268c4"/></linearGradient>
  </defs>
  <!-- palette -->
  <path d="M10 25 C9 19 15 14.500 22 14.500 C29 14.500 33 18 32 23 C31.300 27 28.500 27.500 26 28 C24 28.500 24.500 31 21 31 C18 31 18.500 28 16 28 C13.500 28 10.500 28.500 10 25Z" fill="url(#pal)" stroke="#4f8fc0" stroke-width="1"/>
  <circle cx="14.500" cy="23.500" r="1.900" fill="#e8483c"/><circle cx="18.800" cy="19.300" r="1.900" fill="#6cbf3c"/><circle cx="24.800" cy="18.300" r="2" fill="#f3b51e"/><circle cx="20.300" cy="25" r="1.700" fill="#fff" stroke="#4f8fc0" stroke-width=".8"/>
  <path d="M19.800 33.500 L29.800 14.500 L32 15.700 L21.500 34Z" fill="#f08a1e" stroke="#c96a10" stroke-width=".4"/>
  <path d="M29.800 14.500 L31 12 L33.200 13.200 L32 15.700Z" fill="#8f949a"/>
  <path d="M31 12 L30.800 8.500 Q34 7.500 36 10.500 L33.200 13.200Z" fill="#e3b565" stroke="#b98a3a" stroke-width=".4"/>
  <path d="M40.500 14v19.500" stroke="#8a8a8a" stroke-width="1"/>
  <!-- save -->
  <rect x="61.500" y="15.500" width="15" height="15" rx="1" fill="url(#psv)" stroke="#5a2788" stroke-width=".8"/>
  <rect x="64" y="16" width="10" height="6.500" fill="#f1edf6"/><path d="M64 18h10M64 20h10" stroke="#c9bfd6" stroke-width=".6"/>
  <rect x="65" y="25" width="8" height="5" fill="#d9d4e2"/><rect x="66.300" y="26" width="2" height="3.500" fill="#5a2788"/>
  <!-- undo -->
  <path d="M92.500 13.500 L101.500 12.500 L99.500 15 C108.500 15.500 112 22 109.500 27.500 C108.500 30 106.500 32.500 103.500 33.500 L101 30.500 C104 29 106.500 25.500 105 22.500 C104 20.500 101.500 19.500 97.500 19.500 L98 23.500Z" fill="url(#pud)"/>
  <!-- redo -->
  <path d="M141.500 13.500 L132.500 12.500 L134.500 15 C125.500 15.500 122 22 124.500 27.500 C125.500 30 127.500 32.500 130.500 33.500 L133 30.500 C130 29 127.500 25.500 129 22.500 C130 20.500 132.500 19.500 136.500 19.500 L136 23.500Z" fill="#9fb4d0"/>
  <path d="M155 21h9" stroke="#222" stroke-width="1.300"/><path d="M155 24.500h9l-4.500 4.500z" fill="#222"/>
  <path d="M180.500 14v19.500" stroke="#8a8a8a" stroke-width="1"/>
</svg>
<div class="t" style="left:334.500px;top:238.500px;font-size:18px;color:#111;letter-spacing:-.1px">Untitled - Paint</div>
<svg class="a" style="left:1460px;top:225px" width="200" height="44" viewBox="0 0 200 44">
  <g stroke="#111" stroke-width="1.300" fill="none"><path d="M18 21.500h15"/><rect x="87.500" y="14.500" width="14" height="14"/><path d="M158.500 14.500l14 14M172.500 14.500l-14 14"/></g>
</svg>
<!-- tabs -->
<div class="a" style="left:146px;top:269px;width:84px;height:34px;background:#1979ca"></div>
<div class="a" style="left:230px;top:268px;width:82px;height:36px;background:#f5f6f7;border:1px solid #dadbdc;border-bottom:none"></div>
<svg class="a" style="left:1600px;top:275px" width="56" height="24" viewBox="0 0 56 24">
  <path d="M4.500 14.500l7.500-7 7.500 7" fill="none" stroke="#7a7a7a" stroke-width="1.600"/>
  <circle cx="43.800" cy="11.500" r="11" fill="#1569c7"/>
  <text x="43.800" y="17" text-anchor="middle" font-family="Liberation Sans, sans-serif" font-weight="bold" font-size="15.500" fill="#fff">?</text>
</svg>
<!-- separators -->
<div class="psep" style="left:299px"></div><div class="psep" style="left:470px"></div><div class="psep" style="left:587px"></div><div class="psep" style="left:664px"></div><div class="psep" style="left:958px"></div><div class="psep" style="left:1035px"></div><div class="psep" style="left:1566px"></div><div class="psep" style="left:1648px"></div>
<!-- Clipboard icons -->
<svg class="a" style="left:166px;top:312px" width="40" height="48" viewBox="0 0 40 48">
  <defs><linearGradient id="wd" x1="0" y1="0" x2="1" y2="0"><stop offset="0" stop-color="#c89458"/><stop offset=".5" stop-color="#b47a3c"/><stop offset="1" stop-color="#9a6228"/></linearGradient></defs>
  <rect x="3.500" y="6.500" width="33" height="39" rx="2" fill="url(#wd)" stroke="#8a5a24" stroke-width=".8"/>
  <rect x="6.500" y="10" width="27" height="32.500" fill="#fdfdfe" stroke="#cfd4da" stroke-width=".5"/>
  <g stroke="#b9cbe0" stroke-width=".9"><path d="M7.500 15.500h25M7.500 18.500h25M7.500 21.500h25M7.500 24.500h25M7.500 27.500h25M7.500 30.500h25M7.500 33.500h25M7.500 36.500h25M7.500 39.500h25"/></g>
  <path d="M11 12.500 L16.500 8 h7 L29 12.500z" fill="#e9ecef" stroke="#6b6f75" stroke-width=".7"/>
  <path d="M10.500 13h19" stroke="#222" stroke-width="1.500"/>
  <path d="M17 8 q3-5 6 0" fill="none" stroke="#6b6f75" stroke-width="1"/>
</svg>
<svg class="a" style="left:181px;top:394px" width="9" height="6"><path d="M0 .5h9l-4.500 4.500z" fill="#111"/></svg>
<svg class="a" style="left:225px;top:313px" width="18" height="26" viewBox="0 0 18 26">
  <g fill="none" stroke="#a3b1c9" stroke-width="2"><path d="M5 1.500 L11.500 17 M12.500 1.500 L6 17"/></g>
  <g fill="#f5f6f7" stroke="#a3b1c9" stroke-width="1.800"><ellipse cx="4.500" cy="20" rx="2.600" ry="3.200"/><ellipse cx="13" cy="20" rx="2.600" ry="3.200"/></g>
</svg>
<svg class="a" style="left:222px;top:346px" width="24" height="26" viewBox="0 0 24 26">
  <g fill="#f7f9fc" stroke="#b3bfd3" stroke-width=".9"><path d="M1.500 1.500h8l3.500 3.500v12h-11.500z"/><path d="M9.500 7.500h8l3.500 3.500v13h-11.500z"/></g>
  <g stroke="#c3cddd" stroke-width=".8"><path d="M3.500 6.500h4M3.500 9h6M3.500 11.500h5M12 13.500h7M12 16h7M12 18.500h7M12 21h7"/></g>
</svg>
<!-- Image icons -->
<svg class="a" style="left:314px;top:320px" width="44" height="36" viewBox="0 0 44 36"><rect x="1.500" y="1.500" width="41" height="33.500" fill="#f7f9fb" stroke="#2466a8" stroke-width="1.200" stroke-dasharray="2.500 1.800"/></svg>
<svg class="a" style="left:331px;top:394px" width="9" height="6"><path d="M0 .5h9l-4.500 4.500z" fill="#111"/></svg>
<svg class="a" style="left:372px;top:314px" width="24" height="24" viewBox="0 0 24 24">
  <path d="M1 6.500h17.500v15.500M5.500 1.500v16h17" fill="none" stroke="#9fb0cb" stroke-width="1.200"/>
  <path d="M7 16L17 6.500" stroke="#9fb0cb" stroke-width="1"/><path d="M6.500 7.500h11v9.500h-11z" fill="#dfe6f2" opacity=".6"/>
  <path d="M17 6l4.500-4" stroke="#9fb0cb" stroke-width="1"/>
</svg>
<svg class="a" style="left:372px;top:349px" width="24" height="22" viewBox="0 0 24 22">
  <rect x="6.500" y="1.500" width="14.500" height="11.500" fill="#eef4fa" stroke="#2466a8" stroke-width="1.300"/>
  <rect x="1.500" y="9.500" width="10.500" height="9" fill="#fff" stroke="#2466a8" stroke-width="1.300"/>
</svg>
<svg class="a" style="left:370px;top:378px" width="26" height="22" viewBox="0 0 26 22">
  <defs><linearGradient id="rg" x1="0" y1="1" x2="1" y2="0"><stop offset="0" stop-color="#8a8a8a"/><stop offset="1" stop-color="#e8e8e8"/></linearGradient></defs>
  <path d="M1 20.500 L13 11.500 V20.500Z" fill="url(#rg)"/>
  <path d="M15.500 20.500 V4.500 L23.500 20.500Z" fill="#2f8ad8" stroke="#1b5fa8" stroke-width=".8"/>
  <path d="M5.500 9 q0-5.500 6-5" fill="none" stroke="#1f6fd0" stroke-width="1.400"/><path d="M10.500 1.500l3 2.700-3.300 2z" fill="#1f6fd0"/>
</svg>
<svg class="a" style="left:448px;top:387px" width="9" height="6"><path d="M0 .5h9l-4.500 4.500z" fill="#111"/></svg>
<!-- Tools -->
<svg class="a" style="left:476px;top:320px" width="104" height="82" viewBox="0 0 104 82">
  <defs>
    <linearGradient id="pc" x1="0" y1="0" x2="1" y2="1"><stop offset="0" stop-color="#f9e08a"/><stop offset="1" stop-color="#e0a83a"/></linearGradient>
    <linearGradient id="bk" x1="0" y1="0" x2="1" y2="1"><stop offset="0" stop-color="#f3f8fd"/><stop offset="1" stop-color="#8db7e4"/></linearGradient>
    <linearGradient id="er" x1="0" y1="0" x2="0" y2="1"><stop offset="0" stop-color="#f59a9a"/><stop offset="1" stop-color="#f7b0a0"/></linearGradient>
    <radialGradient id="mg" cx="40%" cy="35%" r="70%"><stop offset="0" stop-color="#fff"/><stop offset="1" stop-color="#bcd6f0"/></radialGradient>
  </defs>
  <!-- pencil -->
  <path d="M7.500 27.500 L9.500 22 L24 7.500 L28 11.500 L13.500 26Z" fill="url(#pc)" stroke="#8a6a2a" stroke-width=".7"/>
  <path d="M7.500 27.500 L9.500 22 L13.500 26Z" fill="#e8c9a0" stroke="#6a5a3a" stroke-width=".5"/><path d="M7.500 27.500l1-2.500 1.700 1.700z" fill="#333"/>
  <path d="M24 7.500 l2-2 q2-.5 3 1 q1.500 1.500 1 3 l-2 2z" fill="#e0676a" stroke="#8a3a3a" stroke-width=".5"/><path d="M23 8.500l4 4" stroke="#3a8a4a" stroke-width="1.200"/>
  <!-- bucket -->
  <path d="M46.500 16 L55.500 7 L63.500 15 L53.500 25.500Z" fill="url(#bk)" stroke="#7fa3cf" stroke-width=".8"/>
  <path d="M46.500 16 Q41 13 40.500 20 Q40 25 41.500 27 Q43 23 45 21.500 Q47 20 49.500 19Z" fill="#f26a1d"/>
  <path d="M54.500 17.500 v-10.500 q0-2.500 1.500-2.500 q1.500 0 1.500 2.500" fill="none" stroke="#8a8f98" stroke-width="1"/><circle cx="54.500" cy="18" r="1.600" fill="#fff" stroke="#8a8f98" stroke-width=".8"/>
  <!-- A -->
  <text x="85.500" y="28.800" text-anchor="middle" font-family="Liberation Serif, serif" font-weight="bold" font-size="31" fill="#1f3a64">A</text>
  <!-- eraser selected -->
  <rect x=".5" y="46.500" width="33" height="31" fill="#c9e0f7" stroke="#62a2e4"/>
  <path d="M6 66.500 L19.500 52 L30 54.500 L28.500 60 L16.500 72 L8 70Z" fill="url(#er)" stroke="#c96a6a" stroke-width=".8"/>
  <path d="M8.500 62.500 L18 65 L16.500 72 L8 70 L6 66.500Z" fill="#fbc4b0" stroke="#c96a6a" stroke-width=".7"/>
  <!-- picker -->
  <path d="M41.500 72 L42.500 69 L53 58 L56 61 L45 71.500Z" fill="#f0f4f8" stroke="#7d8794" stroke-width=".8"/>
  <path d="M51.500 55.500 L58 62 L60.500 59.500 L59.500 58 L63.500 53 Q64.500 50 62.500 49.500 Q60.500 49 59 51 L55.500 54.500 L54 53.500Z" fill="#2f7fd0" stroke="#1b5494" stroke-width=".7"/>
  <!-- magnifier -->
  <path d="M89 63.500 L95.500 72" stroke="#8a5a2a" stroke-width="3" stroke-linecap="round"/>
  <circle cx="83.800" cy="58" r="7.600" fill="url(#mg)" stroke="#8f959c" stroke-width="1.500"/>
</svg>
<!-- Brushes -->
<svg class="a" style="left:600px;top:314px" width="48" height="48" viewBox="0 0 48 48">
  <defs><linearGradient id="bb" x1="0" y1="0" x2="1" y2="1"><stop offset="0" stop-color="#fbfdfe"/><stop offset="1" stop-color="#d5e6ef"/></linearGradient>
  <linearGradient id="hd" x1="0" y1="0" x2="1" y2="1"><stop offset="0" stop-color="#5a6a80"/><stop offset=".5" stop-color="#e9eef5"/><stop offset="1" stop-color="#6a7a90"/></linearGradient>
  <radialGradient id="br" cx="40%" cy="40%" r="70%"><stop offset="0" stop-color="#c09055"/><stop offset="1" stop-color="#7a5228"/></radialGradient></defs>
  <rect x=".5" y=".5" width="47" height="47" fill="url(#bb)" stroke="#8a8a8a"/>
  <path d="M33 22 L47.500 3 V17 L38 28Z" fill="url(#hd)" stroke="#56606e" stroke-width=".6"/>
  <path d="M17 10 Q22 11 19.500 14 Q5 21 6 32 Q8 42 19 42.500 L24 41 L20 35 Q12 37 10.500 29 Q10 20 21 13.500 Q22 10.500 17 10Z" fill="#f0651f"/>
  <path d="M19 42.500 Q26 45 28 40 L22 33.500 Q17 36 19 42.500Z" fill="#e8541a"/>
  <ellipse cx="31" cy="31" rx="10.500" ry="8.500" transform="rotate(-38 31 31)" fill="url(#br)" stroke="#6a4520" stroke-width=".5"/>
</svg>
<svg class="a" style="left:619.500px;top:394px" width="9" height="6"><path d="M0 .5h9l-4.500 4.500z" fill="#111"/></svg>
<!-- Shapes gallery -->
<div class="a" style="left:671px;top:314px;width:174px;height:89px;border:1px solid #dcdddf;background:#f7f8f9"></div>
<div class="a" style="left:671px;top:314px;width:153px;height:90px;border:1px solid #d3d5d8;background:#fafbfc"></div>
<svg class="a" style="left:671px;top:314px" width="176" height="92" viewBox="0 0 176 92">
  <defs><linearGradient id="sh" x1="0" y1="0" x2="1" y2="1"><stop offset="0" stop-color="#f8fbfd"/><stop offset="1" stop-color="#d3e5ee"/></linearGradient></defs>
  <g fill="url(#sh)" stroke="#2167ae" stroke-width="1.200" stroke-linejoin="miter">
    <path d="M4.500 6.500 L28 23.500" fill="none"/>
    <path d="M34.500 23.500 C36 8 42 10 45 17 C48 24 54 20 58 6" fill="none"/>
    <ellipse cx="76" cy="14.500" rx="11.500" ry="8.800"/>
    <rect x="94.500" y="6.500" width="22" height="16.500"/>
    <rect x="124.500" y="6.500" width="23" height="16.500" rx="5"/>
    <path d="M10 36.500 H23 L20 45 H28 V53.500 H4.500Z"/>
    <path d="M46 36 L57.500 55.500 H34.500Z"/>
    <path d="M64.500 34.500 V56 H87Z"/>
    <path d="M105.500 33.500 L117 45 L105.500 56 L94.500 45Z"/>
    <path d="M136 34.500 L148 43.500 L143.500 56 H128.500 L124 43.500Z"/>
    <path d="M16.500 63.500 L28 70 V80.500 L16.500 87 L5.500 80.500 V70Z"/>
    <path d="M34.500 69.500 H45.500 V63.500 L57 75 L45.500 86 V80.500 H34.500Z"/>
    <path d="M87.500 69.500 H76.500 V63.500 L65 75 L76.500 86 V80.500 H87.500Z"/>
    <path d="M100 86.500 V75 H94.500 L105.500 63.500 L117 75 H111 V86.500Z"/>
    <path d="M130 63.500 V75 H124.500 L135.500 86.500 L147 75 H141 V63.500Z"/>
  </g>
  <path d="M158.500 17.500h8l-4-4.500z" fill="#c2c4c8"/>
  <path d="M158 42.500h9l-4.500 4.500z" fill="#555"/>
  <path d="M158 67.500h9" stroke="#555" stroke-width="1.200"/><path d="M158 70.500h9l-4.500 4.500z" fill="#555"/>
</svg>
<!-- outline / fill -->
<svg class="a" style="left:852px;top:317px" width="28" height="56" viewBox="0 0 28 56">
  <path d="M1.500 4.500h17M1.500 4.500v16.500h5" fill="none" stroke="#a9b4c8" stroke-width="1"/>
  <path d="M5.500 20.500 L7.500 15.500 L20 3 Q22.500 1.500 23.800 3 Q25 4.500 23.500 6.500 L11 19Z" fill="#e4e9f1" stroke="#a3aec4" stroke-width=".9"/>
  <path d="M19 4l4 4" stroke="#a3aec4" stroke-width=".8"/>
  <rect x="1" y="45.500" width="24" height="7" fill="#b6c0d6"/>
  <path d="M8 37 L15.500 29.500 L23.500 37.500 L15 46Z" fill="#e6ebf3" stroke="#aab4c9" stroke-width=".9"/>
  <path d="M8 37 Q3 34.500 2.500 40 L2.500 46 Q4 42 8.500 40.500Z" fill="#aeb9d0"/>
  <path d="M15.500 38 v-9" stroke="#aab4c9" stroke-width=".9"/><circle cx="15.500" cy="38.500" r="1.300" fill="#fff" stroke="#aab4c9" stroke-width=".7"/>
</svg>
<svg class="a" style="left:936px;top:322px" width="9" height="6"><path d="M0 .5h8.500l-4.200 4.500z" fill="#666"/></svg>
<svg class="a" style="left:905px;top:354.500px" width="9" height="6"><path d="M0 .5h8.500l-4.200 4.500z" fill="#666"/></svg>
<!-- size -->
<div class="a" style="left:971px;top:316.500px;width:48px;height:1px;background:#1f3864"></div>
<div class="a" style="left:971px;top:321.500px;width:48px;height:2px;background:#1f3864"></div>
<div class="a" style="left:971px;top:327.500px;width:48px;height:4px;background:#1f3864"></div>
<div class="a" style="left:971px;top:337px;width:48px;height:6px;background:#1f3864"></div>
<div class="a" style="left:971px;top:348px;width:48px;height:8px;background:#1f3864"></div>
<svg class="a" style="left:989.500px;top:394px" width="9" height="6"><path d="M0 .5h9l-4.500 4.500z" fill="#111"/></svg>
<!-- color1/2 -->
<div class="a" style="left:1041px;top:310px;width:62px;height:99px;background:#c9e0f7;border:1px solid #62a2e4"></div>
<div class="a" style="left:1048px;top:314px;width:48px;height:48px;border:1px solid #7c7c7c;background:#99d9ea;box-shadow:inset 0 0 0 2px #c9e0f7"></div>
<div class="a" style="left:1116px;top:320px;width:36px;height:36px;border:1px solid #a0a0a0;background:#fff;box-shadow:inset 0 0 0 2px #f5f6f7"></div>
<!-- palette -->
<div class="cc" style="left:1166px;top:311px;background:#000000"></div>
<div class="cc" style="left:1199px;top:311px;background:#7f7f7f"></div>
<div class="cc" style="left:1232px;top:311px;background:#880015"></div>
<div class="cc" style="left:1265px;top:311px;background:#ed1c24"></div>
<div class="cc" style="left:1298px;top:311px;background:#ff7f27"></div>
<div class="cc" style="left:1331px;top:311px;background:#fff200"></div>
<div class="cc" style="left:1364px;top:311px;background:#22b14c"></div>
<div class="cc" style="left:1397px;top:311px;background:#00a2e8"></div>
<div class="cc" style="left:1430px;top:311px;background:#3f48cc"></div>
<div class="cc" style="left:1463px;top:311px;background:#a349a4"></div>
<div class="cc" style="left:1166px;top:344px;background:#ffffff"></div>
<div class="cc" style="left:1199px;top:344px;background:#c3c3c3"></div>
<div class="cc" style="left:1232px;top:344px;background:#b97a57"></div>
<div class="cc" style="left:1265px;top:344px;background:#ffaec9"></div>
<div class="cc" style="left:1298px;top:344px;background:#ffc90e"></div>
<div class="cc" style="left:1331px;top:344px;background:#efe4b0"></div>
<div class="cc" style="left:1364px;top:344px;background:#b5e61d"></div>
<div class="cc" style="left:1397px;top:344px;background:#99d9ea"></div>
<div class="cc" style="left:1430px;top:344px;background:#7092be"></div>
<div class="cc" style="left:1463px;top:344px;background:#c8bfe7"></div>
<div class="ce" style="left:1166px;top:377px"></div>
<div class="ce" style="left:1199px;top:377px"></div>
<div class="ce" style="left:1232px;top:377px"></div>
<div class="ce" style="left:1265px;top:377px"></div>
<div class="ce" style="left:1298px;top:377px"></div>
<div class="ce" style="left:1331px;top:377px"></div>
<div class="ce" style="left:1364px;top:377px"></div>
<div class="ce" style="left:1397px;top:377px"></div>
<div class="ce" style="left:1430px;top:377px"></div>
<div class="ce" style="left:1463px;top:377px"></div>
<div class="a" style="left:1504px;top:316px;width:43px;height:43px;border:2px solid #fff;outline:1px solid #a8a8a8;outline-offset:-1px;box-shadow:0 1px 2px rgba(0,0,0,.3);background:linear-gradient(to bottom,rgba(128,128,128,0) 0,rgba(128,128,128,0) 35%,rgba(128,128,128,.95) 100%),linear-gradient(90deg,#ff0000 0,#ffff00 17%,#00ff00 33%,#00ffff 50%,#0000ff 67%,#ff00ff 83%,#ff0000 100%)"></div>
<div class="a" style="left:1582px;top:315px;width:45px;height:45px;border:1px solid #bdbdbd;background:#f3f3f3;box-shadow:0 1px 1px rgba(0,0,0,.15)"></div>
<svg class="a" style="left:1582px;top:315px" width="45" height="45" viewBox="0 0 45 45">
  <defs><linearGradient id="p3" x1=".85" y1=".05" x2=".3" y2="1"><stop offset="0" stop-color="#25d6f2"/><stop offset=".28" stop-color="#6f80f0"/><stop offset=".5" stop-color="#9a5fe2"/><stop offset=".72" stop-color="#e8408a"/><stop offset=".9" stop-color="#f2683a"/><stop offset="1" stop-color="#f9a000"/></linearGradient>
  <radialGradient id="p3h" cx="35%" cy="30%" r="45%"><stop offset="0" stop-color="#fff" stop-opacity=".35"/><stop offset="1" stop-color="#fff" stop-opacity="0"/></radialGradient></defs>
  <path d="M22.800 4.300 C29.800 4.300 35.500 10 35.500 17 C35.500 24 30 29 26 32.500 C23 35 21 38 18.400 40.700 C18 38 19.500 35 18.500 32 C17 28 10.100 24.500 10.100 17 C10.100 10 15.800 4.300 22.800 4.300Z" fill="url(#p3)"/>
  <circle cx="22.800" cy="17" r="12.500" fill="url(#p3h)"/>
</svg>
<!-- paint scrollbar -->
<div class="a" style="left:1635px;top:441px;width:25px;height:579px;background:#f0f0f0"></div>
<div class="a" style="left:1635px;top:469px;width:25px;height:452px;background:#cdcdcd"></div>
<svg class="a" style="left:1635px;top:441px" width="25" height="28" viewBox="0 0 25 28"><path d="M7 18l5.500-5.500L18 18" fill="none" stroke="#505050" stroke-width="1.800"/></svg>
<div class="a" style="left:993px;top:797px;width:5px;height:5px;border:1px solid #555;background:#fff"></div>
<!-- drawing -->
<svg class="a" style="left:151px;top:447px" width="842" height="573" viewBox="151 447 842 573">
  <g stroke="#000" stroke-width="4" stroke-linecap="round" fill="none">
    <path d="M351.500 562.500V925.500"/>
    <path d="M837.500 745.500V925.500"/>
    <path d="M306.500 820.500H837"/>
    <path d="M353 906H836"/>
    <path d="M462 812.500 L474 820.500 L462 828.500"/>
    <path d="M668 812.500 L657 820.500 L668 828.500"/>
    <path d="M362 896 L352 906 L362 917"/>
    <path d="M826 896 L837 907 L826 917"/>
  </g>
  <g stroke="#99d9ea" fill="none">
    <path d="M351 603.500 L486 662" stroke-width="4" stroke-dasharray="6 7"/>
    <path d="M486 662.500 L536 684.500" stroke-width="4"/>
    <path d="M498 659 L485.500 662.500 L494 674" stroke-width="3.500" stroke-linecap="round"/>
    <path d="M536 684.500 L839 816" stroke-width="4" stroke-dasharray="7 6"/>
    <path d="M876 751 L801 888" stroke-width="4" stroke-dasharray="11 7"/>
  </g>
  <g font-family="Liberation Serif, serif" font-weight="bold" fill="#000">
    <text x="333" y="703" font-size="22">d</text>
    <text x="370.500" y="873.500" font-size="22">S</text>
    <text x="795.500" y="857" font-size="23">M</text>
    <text x="543" y="889" font-size="24">1.5m</text>
  </g>
</svg>
<div class="pt" style="left:176.7px;top:278.2px;color:#fff;letter-spacing:-0.42px">File</div>
<div class="pt" style="left:250.3px;top:278.2px;color:#444;letter-spacing:0.01px">Home</div>
<div class="pt" style="left:333.0px;top:278.2px;color:#444;letter-spacing:0.09px">View</div>
<div class="pt" style="left:167.0px;top:369.1px;color:#444;letter-spacing:-0.93px">Paste</div>
<div class="pt" style="left:249.5px;top:318.7px;color:#9b9b9b;letter-spacing:-0.17px">Cut</div>
<div class="pt" style="left:249.5px;top:350.7px;color:#9b9b9b;letter-spacing:-0.22px">Copy</div>
<div class="pt" style="left:314.9px;top:369.1px;color:#444;letter-spacing:-0.37px">Select</div>
<div class="pt" style="left:399.5px;top:318.7px;color:#9b9b9b;letter-spacing:-0.15px">Crop</div>
<div class="pt" style="left:399.5px;top:350.5px;color:#444;letter-spacing:-0.68px">Resize</div>
<div class="pt" style="left:399.5px;top:382.2px;color:#444;letter-spacing:-0.23px">Rotate</div>
<div class="pt" style="left:188.5px;top:419.2px;color:#5a5a5a;letter-spacing:0.07px">Clipboard</div>
<div class="pt" style="left:361.4px;top:419.2px;color:#5a5a5a;letter-spacing:-0.10px">Image</div>
<div class="pt" style="left:509.3px;top:419.2px;color:#5a5a5a;letter-spacing:-0.49px">Tools</div>
<div class="pt" style="left:596.7px;top:369.3px;color:#444;letter-spacing:-0.48px">Brushes</div>
<div class="pt" style="left:783.7px;top:419.2px;color:#5a5a5a;letter-spacing:-0.53px">Shapes</div>
<div class="pt" style="left:881.5px;top:318.5px;color:#9b9b9b;letter-spacing:0.14px">Outline</div>
<div class="pt" style="left:881.5px;top:350.5px;color:#9b9b9b;letter-spacing:-0.30px">Fill</div>
<div class="pt" style="left:980.3px;top:369.8px;color:#444;letter-spacing:-0.59px">Size</div>
<div class="pt" style="left:1052.9px;top:369.8px;color:#444;letter-spacing:0.03px">Color</div>
<div class="pt" style="left:1067.2px;top:390.5px;color:#444;letter-spacing:0.00px">1</div>
<div class="pt" style="left:1114.9px;top:369.8px;color:#444;letter-spacing:0.03px">Color</div>
<div class="pt" style="left:1129.2px;top:390.5px;color:#444;letter-spacing:0.00px">2</div>
<div class="pt" style="left:1512.2px;top:370.1px;color:#444;letter-spacing:-0.38px">Edit</div>
<div class="pt" style="left:1504.5px;top:390.8px;color:#444;letter-spacing:-0.06px">colors</div>
<div class="pt" style="left:1575.4px;top:370.1px;color:#444;letter-spacing:0.08px">Edit with</div>
<div class="pt" style="left:1576.4px;top:390.8px;color:#444;letter-spacing:-0.32px">Paint 3D</div>
<div class="pt" style="left:1276.0px;top:419.2px;color:#5a5a5a;letter-spacing:-0.02px">Colors</div>
<!--PAINT-DETAIL-->
<!-- ================= TASKBAR ================= -->
<div id="tb" class="a"></div>
<div class="a" style="left:0;top:1020px;width:73px;height:60px;background:#181818"></div>
<svg class="a" style="left:23px;top:1037px" width="26" height="26" viewBox="0 0 26 26">
  <path d="M.8 4.200 L10.800 2.800 V12.200 H.8Z M12.200 2.600 L25 .8 V12.200 H12.200Z M.8 13.600 H10.800 V23 L.8 21.600Z M12.200 13.600 H25 V25 L12.200 23.200Z" fill="#fff"/>
</svg>
<div class="a" style="left:73px;top:1020px;width:514px;height:60px;background:#f2f2f2;border:1px solid #c9c9c9;border-top:2px solid #c4c4c4;border-bottom:none"></div>
<svg class="a" style="left:88px;top:1036px" width="30" height="28" viewBox="0 0 30 28"><circle cx="17.500" cy="10.500" r="7.800" fill="none" stroke="#1e1e1e" stroke-width="1.800"/><path d="M12 16.500L2.500 25.500" stroke="#1e1e1e" stroke-width="1.800"/></svg>
<div class="t" style="left:132.500px;top:1041.500px;font-size:22.500px;color:#2b2b2b;letter-spacing:-.1px">Type here to search</div>
<!-- cortana / taskview -->
<svg class="a" style="left:608px;top:1034px" width="110" height="32" viewBox="0 0 110 32">
  <circle cx="15.800" cy="16" r="10.300" fill="none" stroke="#fff" stroke-width="3.200"/>
  <g fill="none" stroke="#fff" stroke-width="1.300"><rect x="76.500" y="10.500" width="15" height="11"/><path d="M76.500 7.500v-3.500M91.500 7.500v-3.500M76.500 4.500h15M76.500 24.500v3.500M91.500 24.500v3.500M76.500 27.500h15M98.500 4v23.500"/></g>
  <rect x="97" y="11" width="3" height="3.500" fill="#fff"/>
</svg>
<!-- indicators -->
<div class="a" style="left:743px;top:1077px;width:61px;height:3px;background:#76b9ed"></div>
<div class="a" style="left:968px;top:1077px;width:47px;height:3px;background:#76b9ed"></div>
<div class="a" style="left:1016px;top:1077px;width:13px;height:3px;background:#5a8fbd"></div>
<div class="a" style="left:1043px;top:1077px;width:61px;height:3px;background:#76b9ed"></div>
<div class="a" style="left:1118px;top:1077px;width:61px;height:3px;background:#76b9ed"></div>
<div class="a" style="left:1187px;top:1020px;width:73px;height:60px;background:#6f6f6f"></div>
<div class="a" style="left:1187px;top:1077px;width:73px;height:3px;background:#76b9ed"></div>
<div class="a" style="left:1268px;top:1077px;width:61px;height:3px;background:#76b9ed"></div>
<!-- explorer -->
<svg class="a" style="left:756px;top:1034px" width="36" height="32" viewBox="0 0 36 32">
  <path d="M1.500 5 Q1.500 3 3.500 3 H13 L16 6 H31 Q33 6 33 8 V27 H1.500Z" fill="#e8a818"/>
  <path d="M1.500 9 H33.500 V27.500 Q33.500 29 32 29 H3 Q1.500 29 1.500 27.500Z" fill="#fcd462"/>
  <path d="M9 29 V20.500 Q9 19 10.500 19 H24.500 Q26 19 26 20.500 V29 H21.500 V23.500 H13.500 V29Z" fill="#3f8fd8"/>
</svg>
<!-- store -->
<svg class="a" style="left:829px;top:1030px" width="38" height="38" viewBox="0 0 38 38">
  <path d="M12 10 Q12 2.500 19 2.500 Q26 2.500 26 10" fill="none" stroke="#e6e6e6" stroke-width="1.800"/>
  <path d="M14.500 10 Q14.500 5 19 5 Q23.500 5 23.500 10" fill="none" stroke="#bdbdbd" stroke-width="1.200"/>
  <path d="M1.500 9.500 H36.500 V33.500 Q36.500 35.500 34.500 35.500 H3.500 Q1.500 35.500 1.500 33.500Z" fill="#fff"/>
  <rect x="12" y="15" width="6.500" height="6.500" fill="#f25022"/><rect x="19.700" y="15" width="6.500" height="6.500" fill="#7fba00"/><rect x="12" y="22.700" width="6.500" height="6.500" fill="#00a4ef"/><rect x="19.700" y="22.700" width="6.500" height="6.500" fill="#ffb900"/>
</svg>
<!-- mail -->
<svg class="a" style="left:904px;top:1031px" width="38" height="36" viewBox="0 0 38 36">
  <path d="M1 13 L19 1.500 L37 13 V20 H1Z" fill="#0f5fae"/>
  <path d="M5.500 10.500 H32.500 V24 H5.500Z" fill="#fff"/>
  <path d="M1 13 L19 24.500 L37 13 V32.500 Q37 34.500 35 34.500 H3 Q1 34.500 1 32.500Z" fill="#2bb3f2"/>
  <path d="M37 13 L13 34.500 H35 Q37 34.500 37 32.500Z" fill="#1a8fe0"/>
</svg>
<!-- chrome -->
<svg class="a" style="left:981px;top:1033px" width="34" height="34" viewBox="-17 -17 34 34">
  <circle r="16.500" fill="#fbc116"/>
  <path d="M0 0 L-14.290 -8.250 A16.500 16.500 0 0 1 14.290 -8.250Z" fill="#db4437"/>
  <path d="M0 0 L-14.290 -8.250 A16.500 16.500 0 0 0 0 16.500 L7.140 4.120Z" fill="#0f9d58"/>
  <path d="M0 -8.250 H14.290 A16.500 16.500 0 0 1 0 16.500 L7.140 4.120Z" fill="#fbc116"/>
  <path d="M-14.290 -8.250 A16.500 16.500 0 0 1 14.290 -8.250 H0Z" fill="#db4437"/>
  <circle r="7.600" fill="#fff"/><circle r="6" fill="#4285f4"/>
</svg>
<!-- flipkart -->
<svg class="a" style="left:1056px;top:1032px" width="36" height="36" viewBox="0 0 36 36">
  <path d="M1.500 5.500 Q1.500 3.500 3.500 3.500 H31 Q33 3.500 33 5.500 V31.500 Q33 33.500 31 33.500 H3.500 Q1.500 33.500 1.500 31.500Z" fill="#fbd51b"/>
  <path d="M3 2.500 H31.500 V7 H3Z" fill="#f5b800"/>
  <path d="M10.500 6.500 Q11 14 17.500 14 Q24 14 24.500 6.500" fill="none" stroke="#fff" stroke-width="1.500"/>
  <path d="M27.500 14.500 Q22 13 20.500 18 L20 20.500 H16.500 L16 23.500 H19.500 L17.500 33.500 H21.500 L23.500 23.500 H27 L27.500 20.500 H24 L24.300 19 Q24.800 17 27 17.800Z" fill="#1f6fd6"/>
  <path d="M10 24.500h7M8 27.500h8" stroke="#1f6fd6" stroke-width="1.300"/>
</svg>
<!-- telegram -->
<svg class="a" style="left:1130px;top:1032px" width="36" height="36" viewBox="0 0 36 36">
  <circle cx="18" cy="18" r="17.500" fill="#2ea6de"/>
  <path d="M6.500 17.500 L27.500 9 L24 27.500 L17.500 22.500 L14.500 26 L13.500 20.500Z" fill="#fff"/>
  <path d="M13.500 20.500 L24.500 12 L16 22 L14.500 26Z" fill="#c8daea"/>
</svg>
<!-- paint -->
<svg class="a" style="left:1203px;top:1031px" width="40" height="38" viewBox="0 0 40 38">
  <defs><linearGradient id="tpl" x1="0" y1="0" x2="1" y2="1"><stop offset="0" stop-color="#eef6fb"/><stop offset="1" stop-color="#8db9dd"/></linearGradient></defs>
  <path d="M2.500 22 C2.500 12 12 7 21.500 8.500 C30.500 10 33 17 31 23 C29 28.500 25 27.500 22.500 30 C20.500 32 22 35 17.500 35 C8 35 2.500 30.500 2.500 22Z" fill="url(#tpl)" stroke="#6f9cc4" stroke-width=".8"/>
  <circle cx="9" cy="19" r="2.300" fill="#e23b2e"/><circle cx="14.500" cy="14.500" r="2.300" fill="#4fae3c"/><circle cx="21.500" cy="13.500" r="2.300" fill="#f0b020"/><circle cx="17" cy="24.500" r="2.400" fill="#5a6472"/>
  <path d="M17.500 35.500 L27.500 9.500 L30.500 10.500 L20.500 36Z" fill="#e08a2e" stroke="#9a5a1a" stroke-width=".5"/>
  <path d="M27.500 9.500 L30.500 1.500 Q34 3 33 6.500 L30.500 10.500Z" fill="#ecd2a0" stroke="#9a7a4a" stroke-width=".5"/>
</svg>
<!-- word -->
<svg class="a" style="left:1279px;top:1031px" width="38" height="36" viewBox="0 0 38 36">
  <defs><linearGradient id="twd" x1="0" y1="0" x2="1" y2="1"><stop offset="0" stop-color="#7fa3e6"/><stop offset="1" stop-color="#1d3f9c"/></linearGradient></defs>
  <path d="M2 5 Q7 1 18 1.500 H29 V10 H18 Q12 12 12 20 V33 L2 29Z" fill="url(#twd)"/>
  <path d="M11.500 6.500 L35.500 8 V31 L11.500 33.500Z" fill="#f4f6fb" stroke="#c9cfdd" stroke-width=".6"/>
  <text x="14.500" y="18.500" font-family="Liberation Sans, sans-serif" font-weight="bold" font-style="italic" font-size="12" fill="#1d3f9c">W</text>
  <g stroke="#1d3f9c" stroke-width="1.600"><path d="M27 11h6.500M27 14.500h6.500M27 18h6.500M14.500 22h19M14.500 25.500h19M14.500 29h19"/></g>
</svg>
<!-- tray -->
<svg class="a" style="left:1595px;top:1034px" width="140" height="32" viewBox="0 0 140 32">
  <path d="M6 19.500 L15 11 L24 19.500" fill="none" stroke="#fff" stroke-width="1.400"/>
  <g fill="none" stroke="#fff" stroke-width="1.100"><path d="M43.500 26 A17.500 17.500 0 0 1 61 8.500" opacity=".8"/><path d="M48 26 A13 13 0 0 1 61 13"/><path d="M52.500 26 A8.500 8.500 0 0 1 61 17.500"/></g><circle cx="59.500" cy="24.500" r="1.600" fill="#fff"/>
  <rect x="80" y="11.500" width="18" height="10.500" fill="#fff"/><rect x="79" y="10.500" width="20" height="12.500" fill="none" stroke="#fff" stroke-width="1"/><rect x="99" y="14.500" width="1.500" height="4.500" fill="#fff"/>
  <path d="M76.500 7v4.500M80.500 7v4.500M75 11.500h7v3.500q0 2-3.500 2t-3.500-2zM78.500 17v5.500h2" fill="none" stroke="#fff" stroke-width="1.100"/>
  <path d="M112 13.500h3.500l5-5v16l-5-5h-3.500z" fill="none" stroke="#fff" stroke-width="1.200"/>
  <g fill="none" stroke="#fff"><path d="M124 13q2 3.500 0 7" stroke-width="1.100"/><path d="M127.500 10.500q3.500 6 0 12" stroke-width="1" opacity=".55"/><path d="M131 8q5 8.500 0 17" stroke-width="1" opacity=".35"/></g>
</svg>
<div class="t" style="left:1756.500px;top:1028.300px;font-size:18px;color:#fff;letter-spacing:-.55px">1:50 PM</div>
<div class="t" style="left:1747px;top:1056.300px;font-size:18px;color:#fff;letter-spacing:.3px">7/29/2020</div>
<svg class="a" style="left:1857px;top:1037px" width="28" height="28" viewBox="0 0 28 28"><path d="M1.500 1.500 H24.500 V19.500 H17 L13 23.500 L9 19.500 H1.500Z" fill="none" stroke="#fff" stroke-width="1.300"/></svg>
<div class="a" style="left:1913px;top:1020px;width:1px;height:60px;background:#8a8a8a"></div>
<!--TASKBAR-DETAIL-->
</body>
</html>
